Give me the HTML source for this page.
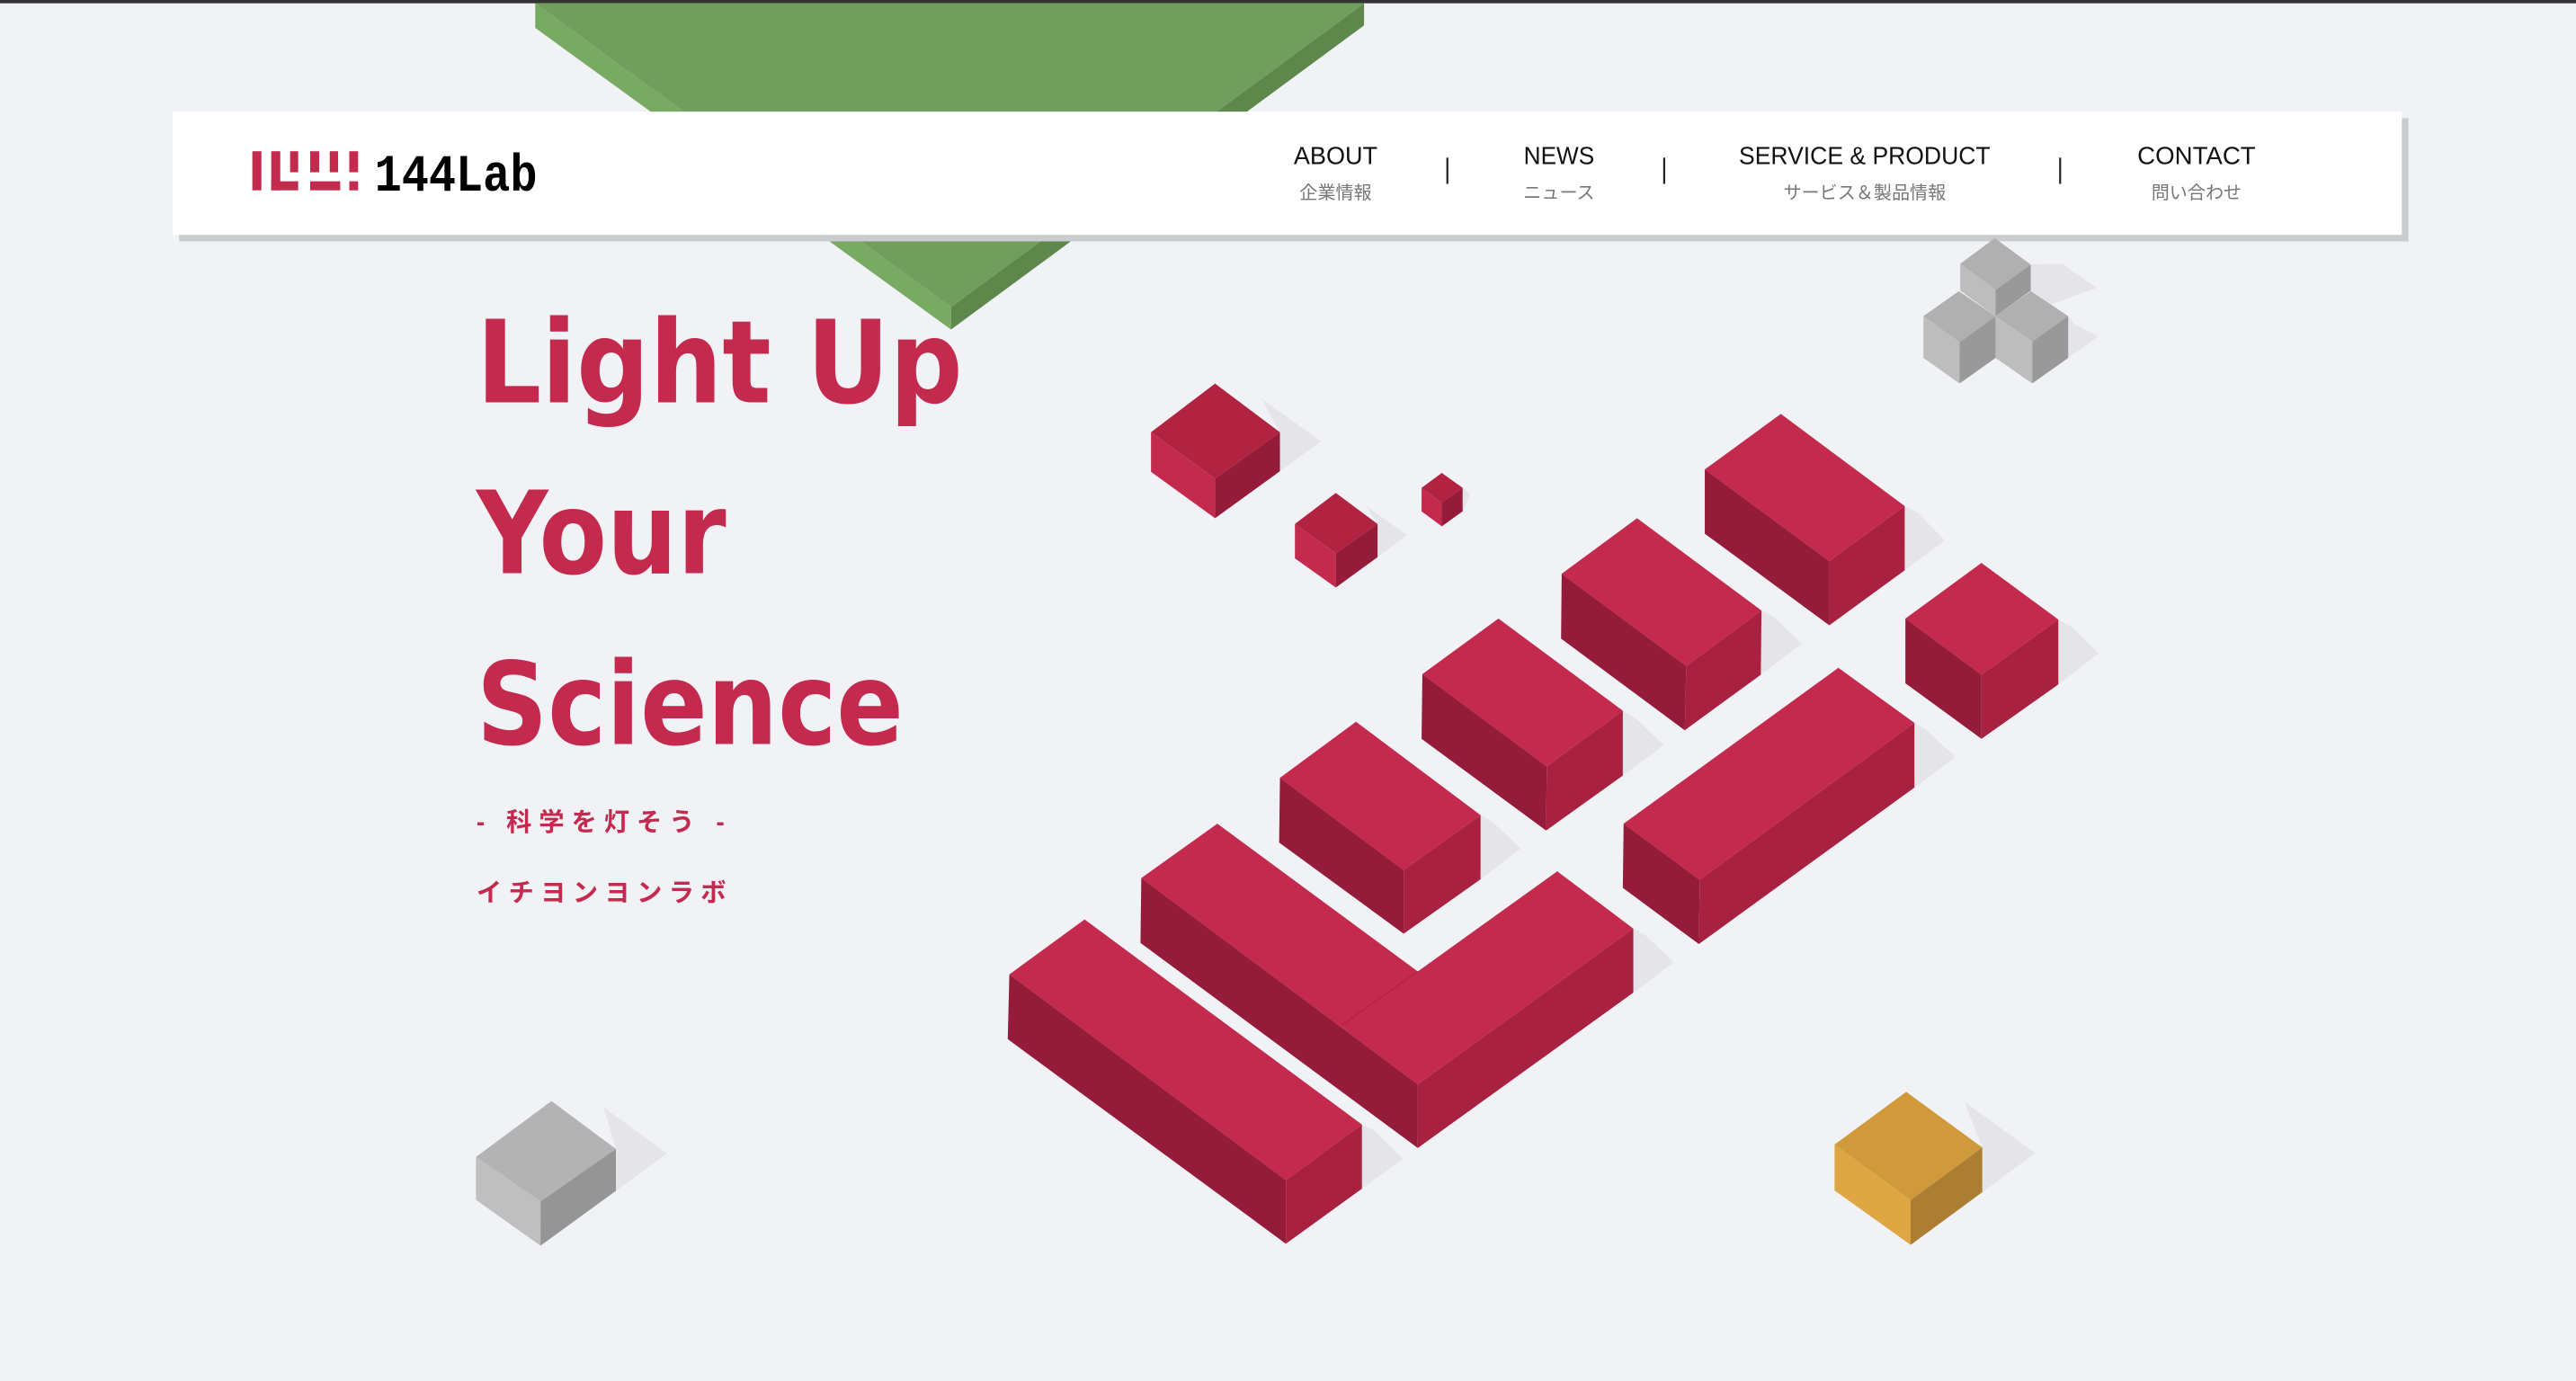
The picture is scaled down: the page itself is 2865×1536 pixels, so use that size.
<!DOCTYPE html>
<html><head><meta charset="utf-8"><style>
html,body{margin:0;padding:0;background:#f1f2f6;overflow:hidden}
svg{display:block}
</style></head><body>
<svg width="2865" height="1536" viewBox="0 0 1568 841" preserveAspectRatio="none" xmlns="http://www.w3.org/2000/svg">
<rect width="1568" height="841" fill="#f1f2f6"/>
<rect width="1568" height="2" fill="#333"/>
<polygon points="325.8,2 578.9,187 578.9,200.7 325.8,17" fill="#78aa63"/>
<polygon points="830.3,2 830.3,15.5 578.9,200.7 578.9,187" fill="#5d874b"/>
<polygon points="325.8,2 830.3,2 578.9,187" fill="#6f9e5d"/>
<rect x="109" y="72" width="1357" height="75" fill="#cbccd0"/>
<rect x="105" y="68" width="1357" height="75" fill="#fff"/>
<g fill="#c42a4e">
<rect x="153.6" y="92.1" width="5.5" height="23.8"/>
<rect x="165.1" y="92.1" width="5.5" height="23.8"/>
<rect x="165.1" y="110.4" width="16.4" height="5.5"/>
<rect x="176.6" y="92.1" width="4.9" height="12.8"/>
<rect x="188.8" y="92.1" width="5.5" height="12.8"/>
<rect x="200.7" y="92.1" width="5.1" height="12.8"/>
<rect x="188.8" y="110.4" width="18.3" height="5.5"/>
<rect x="212.6" y="92.1" width="5.4" height="12.8"/>
<rect x="212.6" y="110.4" width="5.4" height="5.5"/>
</g>
<text x="228" y="116" font-family="Liberation Mono, monospace" font-weight="bold" font-size="32" textLength="99" lengthAdjust="spacingAndGlyphs" fill="#000">144Lab</text>
<g font-family="Liberation Sans, sans-serif" font-size="15" fill="#111" text-anchor="middle">
<text x="813" y="100" textLength="51" lengthAdjust="spacingAndGlyphs">ABOUT</text>
<text x="949" y="100" textLength="43" lengthAdjust="spacingAndGlyphs">NEWS</text>
<text x="1135" y="100" textLength="153" lengthAdjust="spacingAndGlyphs">SERVICE &amp; PRODUCT</text>
<text x="1337" y="100" textLength="72" lengthAdjust="spacingAndGlyphs">CONTACT</text>
</g>
<g font-family="Liberation Sans, Noto Sans CJK JP, sans-serif" font-size="11" fill="#777" text-anchor="middle">
<text x="813" y="121">企業情報</text>
<text x="949" y="121">ニュース</text>
<text x="1135" y="121">サービス＆製品情報</text>
<text x="1337" y="121">問い合わせ</text>
</g>
<g stroke="#222" stroke-width="1.2">
<line x1="881" y1="96" x2="881" y2="112"/>
<line x1="1013" y1="96" x2="1013" y2="112"/>
<line x1="1254" y1="96" x2="1254" y2="112"/>
</g>
<g font-family="DejaVu Sans, Liberation Sans, sans-serif" font-weight="bold" fill="#c42a4e">
<text x="290" y="245" font-size="70" textLength="296" lengthAdjust="spacingAndGlyphs">Light Up</text>
<text x="290" y="349" font-size="70" textLength="152" lengthAdjust="spacingAndGlyphs">Your</text>
<text x="290" y="453" font-size="70" textLength="260" lengthAdjust="spacingAndGlyphs">Science</text>
</g>
<g font-family="Liberation Sans, Noto Sans CJK JP, sans-serif" font-weight="bold" font-size="15.5" fill="#c42a4e">
<text x="290" y="506" textLength="151" lengthAdjust="spacing">- 科学を灯そう -</text>
<text x="290" y="549" textLength="152" lengthAdjust="spacing">イチヨンヨンラボ</text>
</g>
<g fill="#e4e4e9">
<polygon points="767.7,242.6 804,268.8 779.1,287 779.1,263.2"/>
<polygon points="831.3,307.9 856.2,325.7 838.5,339.3 838.5,319.1"/>
<polygon points="885,292 895,301 890.3,311.4 890.3,297.1"/>
<polygon points="1159.4,308.2 1167,312 1183.9,329.2 1159.4,347.3"/>
<polygon points="1072.2,371.8 1080,376 1096.7,392 1071.8,410.9"/>
<polygon points="987.8,432.8 995,437 1012.8,453.8 987.8,472.3"/>
<polygon points="901.2,496.4 908,500 925.7,516.6 901.2,535.5"/>
<polygon points="1252.9,377.3 1260,381 1277.4,397.9 1252.9,416.8"/>
<polygon points="1165.3,440.2 1172,444 1190.3,461.1 1165.3,479.6"/>
<polygon points="994.2,565.5 1001,569 1018.7,586.1 994.2,604.5"/>
<polygon points="829,684.8 836,688 854,705.7 829,723.9"/>
<polygon points="1195.7,670.9 1238.8,702.3 1206.6,726 1206.6,698.8"/>
<polygon points="367.6,674.5 406,702.4 374.9,725.2 374.9,699.7"/>
<polygon points="1236,161 1255.2,160.6 1276.2,175.2 1236,190"/>
<polygon points="1258.9,192.5 1263,197.5 1277,205 1258.9,218"/>
</g>
<polygon points="739.6,233.6 779.1,263.2 739.6,291.5 700.6,263.2" fill="#b22342"/>
<polygon points="700.6,263.2 739.6,291.5 739.6,315.6 700.6,287.3" fill="#c42a4e"/>
<polygon points="739.6,291.5 779.1,263.2 779.1,287 739.6,315.6" fill="#951b3a"/>
<polygon points="813.1,300.2 838.5,319.1 813.1,336.9 788.2,319.1" fill="#b22342"/>
<polygon points="788.2,319.1 813.1,336.9 813.1,357.8 788.2,340" fill="#c42a4e"/>
<polygon points="813.1,336.9 838.5,319.1 838.5,339.3 813.1,357.8" fill="#951b3a"/>
<polygon points="877.6,288 890.3,297.1 877.6,306.2 865.3,297.1" fill="#b22342"/>
<polygon points="865.3,297.1 877.6,306.2 877.6,320.5 865.3,311.4" fill="#c42a4e"/>
<polygon points="877.6,306.2 890.3,297.1 890.3,311.4 877.6,320.5" fill="#951b3a"/>
<g>
<polygon points="1084,252.1 1159.4,308.2 1113.5,341.7 1037.7,285.9" fill="#c42a4e"/>
<polygon points="1037.7,285.9 1113.5,341.7 1113.5,380.8 1037.7,325" fill="#951b3a"/>
<polygon points="1113.5,341.7 1159.4,308.2 1159.4,347.3 1113.5,380.8" fill="#a92140"/>
<polygon points="1206.1,342.8 1252.9,377.3 1206.1,410.9 1159.8,376.7" fill="#c42a4e"/>
<polygon points="1159.8,376.7 1206.1,410.9 1206.1,449.9 1159.8,416.1" fill="#951b3a"/>
<polygon points="1206.1,410.9 1252.9,377.3 1252.9,416.8 1206.1,449.9" fill="#a92140"/>
<polygon points="996.5,315.6 1072.2,371.8 1026.4,405.6 950.6,349.4" fill="#c42a4e"/>
<polygon points="950.6,349.4 1026.4,405.6 1025.5,444.7 950.2,388.9" fill="#951b3a"/>
<polygon points="1026.4,405.6 1072.2,371.8 1071.8,410.9 1025.5,444.7" fill="#a92140"/>
<polygon points="912.1,376.7 987.8,432.8 941.5,466.7 865.8,410.5" fill="#c42a4e"/>
<polygon points="865.8,410.5 941.5,466.7 941.1,505.8 865.3,449.9" fill="#951b3a"/>
<polygon points="941.5,466.7 987.8,432.8 987.8,472.3 941.1,505.8" fill="#a92140"/>
<polygon points="1119,406.7 1165.3,440.2 1034.6,535.8 988.3,501.6" fill="#c42a4e"/>
<polygon points="988.3,501.6 1034.6,535.8 1034.1,574.9 987.8,540.7" fill="#951b3a"/>
<polygon points="1034.6,535.8 1165.3,440.2 1165.3,479.6 1034.1,574.9" fill="#a92140"/>
<polygon points="825.4,439.5 901.2,496.4 854.4,529.9 779.1,473.7" fill="#c42a4e"/>
<polygon points="779.1,473.7 854.4,529.9 854.4,568.6 778.6,513.1" fill="#951b3a"/>
<polygon points="854.4,529.9 901.2,496.4 901.2,535.5 854.4,568.6" fill="#a92140"/>
<polygon points="741,501.6 863,591.6 947.9,530.6 994.2,565.5 863,660.4 694.7,534.7" fill="#c42a4e"/>
<line x1="817" y1="624" x2="863" y2="591.6" stroke="#b12445" stroke-width="0.8"/>
<polygon points="694.7,534.7 863,660.4 863,699.1 694.2,574.2" fill="#951b3a"/>
<polygon points="863,660.4 994.2,565.5 994.2,604.5 863,699.1" fill="#a92140"/>
<polygon points="660.2,559.9 829,684.8 782.7,718.7 614.4,593.4" fill="#c42a4e"/>
<polygon points="614.4,593.4 782.7,718.7 782.7,757.4 613.4,632.8" fill="#951b3a"/>
<polygon points="782.7,718.7 829,684.8 829,723.9 782.7,757.4" fill="#a92140"/>
</g>
<polygon points="1160.3,664.9 1206.6,698.8 1163,730.9 1116.7,697" fill="#cf993c"/>
<polygon points="1116.7,697 1163,730.9 1163,758.1 1116.7,725" fill="#dea744"/>
<polygon points="1163,730.9 1206.6,698.8 1206.6,726 1163,758.1" fill="#ab7e34"/>
<polygon points="335.7,670.5 374.9,699.7 329,731.6 289.7,704.6" fill="#b3b3b3"/>
<polygon points="289.7,704.6 329,731.6 329,758.6 289.7,730.7" fill="#bfbfbf"/>
<polygon points="329,731.6 374.9,699.7 374.9,725.2 329,758.6" fill="#959595"/>
<polygon points="1214.2,145 1236.1,161.1 1214.7,176.6 1193.2,160.6" fill="#b0b0b0"/>
<polygon points="1193.2,160.6 1214.7,176.6 1214.7,192.5 1193.2,177" fill="#bdbdbd"/>
<polygon points="1214.7,176.6 1236.1,161.1 1236.1,177 1214.7,192.5" fill="#999"/>
<polygon points="1192.3,177.3 1214.7,192.5 1192.8,208.5 1170.8,192.5" fill="#b0b0b0"/>
<polygon points="1170.8,192.5 1192.8,208.5 1192.8,233.5 1170.8,218" fill="#bdbdbd"/>
<polygon points="1192.8,208.5 1214.7,192.5 1214.7,218 1192.8,233.5" fill="#999"/>
<polygon points="1236.1,177.3 1258.9,192.5 1237,208 1214.7,192.5" fill="#b0b0b0"/>
<polygon points="1214.7,192.5 1237,208 1237,233.5 1214.7,218" fill="#bdbdbd"/>
<polygon points="1237,208 1258.9,192.5 1258.9,218 1237,233.5" fill="#999"/>
</svg>
</body></html>
